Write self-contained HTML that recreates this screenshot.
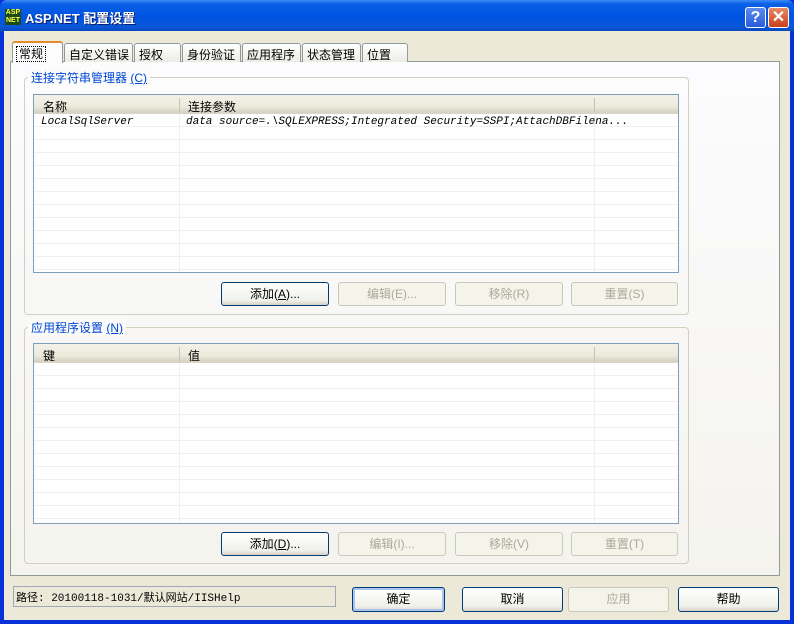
<!DOCTYPE html><html><head><meta charset="utf-8"><style>
*{margin:0;padding:0;box-sizing:border-box}
body{width:794px;height:624px;overflow:hidden;background:#0831d9;font-family:"Liberation Sans","SimSun","Noto Sans CJK SC",sans-serif;font-size:12px;position:relative}
.a{position:absolute}
#title{left:0;top:0;width:794px;height:32px;background:linear-gradient(#3d8cf7 0,#0a5fe6 4px,#0054e3 50%,#0a57d6 85%,#0842b8 100%);border-radius:7px 7px 0 0}
#frame{left:4px;top:31px;width:786px;height:589px;background:#ece9d8}
.tab{top:43px;height:19px;background:linear-gradient(#fff,#ecebe6);border:1px solid #919b9c;border-bottom:none;border-radius:3px 3px 0 0;padding:2px 0 0 4px;font-size:12px}
.page{left:10px;top:61px;width:770px;height:515px;border:1px solid #919b9c;background:linear-gradient(#fcfcfe,#f4f3ee)}
.grp{border:1px solid #d0d0bf;border-radius:4px}
.gl{background:#fbfbfa;color:#0046d5;padding:0 3px;font-size:12px}
.lv{border:1px solid #7f9db9;background:#fff;overflow:hidden}
.hd{left:0;top:0;right:0;height:19px;background:linear-gradient(#f3f2ea,#ebeadb 70%,#d6d3c4);border-bottom:2px solid #d8d5c6;font-size:12px}
.rows{left:0;right:0;top:19px;bottom:0;background:repeating-linear-gradient(to bottom,#fff 0,#fff 12px,#f0f0f0 12px,#f0f0f0 13px)}
.vl{top:0;bottom:0;width:1px;background:#f0f0f0}
.hs{top:3px;width:1px;height:14px;background:#c7c5b2}
.btn{height:24px;border:1px solid #003c74;border-radius:3px;background:linear-gradient(#fff,#f0f0ea 80%,#d6d0c5);text-align:center;line-height:22px;font-size:12px;color:#000}
.dis{border-color:#c9c7ba;color:#aca899;background:#f5f4ea}
.mono{font-family:"Liberation Mono","SimSun",monospace;font-style:italic;font-size:11px}
</style></head><body>
<div class="a" id="title"></div>
<div class="a" style="left:5px;top:9px;width:16px;height:16px;background:#1a4a1a;color:#ff4;font-size:7px;line-height:8px;font-weight:bold;text-align:center">ASP<br>NET</div>
<div class="a" style="left:25px;top:8px;color:#fff;font-size:13px;font-weight:bold;text-shadow:1px 1px #0a1e6e">ASP.NET 配置设置</div>
<div class="a" style="left:745px;top:7px;width:21px;height:21px;border:1px solid #fff;border-radius:3px;background:linear-gradient(#5c8cf0,#2a5bd8);color:#fff;font-weight:bold;font-size:16px;text-align:center;line-height:19px">?</div>
<div class="a" style="left:768px;top:7px;width:21px;height:21px;border:1px solid #fff;border-radius:3px;background:linear-gradient(#e88a64,#c8401c);color:#fff;font-weight:bold;font-size:16px;text-align:center;line-height:19px">✕</div>
<div class="a" id="frame"></div>
<div class="a page"></div>
<div class="a tab" style="left:64px;width:69px">自定义错误</div>
<div class="a tab" style="left:134px;width:47px">授权</div>
<div class="a tab" style="left:182px;width:59px">身份验证</div>
<div class="a tab" style="left:242px;width:59px">应用程序</div>
<div class="a tab" style="left:302px;width:59px">状态管理</div>
<div class="a tab" style="left:362px;width:46px">位置</div>
<div class="a tab" style="left:12px;top:41px;width:51px;height:22px;border-top:2px solid #e68b2c;background:#fcfcfe"><span style="outline:1px dotted #000;padding:0 2px">常规</span></div>

<div class="a grp" style="left:24px;top:77px;width:665px;height:238px"></div>
<div class="a gl" style="left:28px;top:69px">连接字符串管理器 <u>(C)</u></div>
<div class="a lv" style="left:33px;top:94px;width:646px;height:179px">
 <div class="a hd"><span class="a" style="left:9px;top:3px">名称</span><span class="a" style="left:154px;top:3px">连接参数</span><div class="a hs" style="left:145px"></div><div class="a hs" style="left:560px"></div></div>
 <div class="a rows"></div><div class="a vl" style="left:145px;top:19px"></div><div class="a vl" style="left:560px;top:19px"></div>
 <div class="a mono" style="left:7px;top:21px">LocalSqlServer</div>
 <div class="a mono" style="left:152px;top:21px">data source=.\SQLEXPRESS;Integrated Security=SSPI;AttachDBFilena...</div>
</div>
<div class="a btn" style="left:221px;top:282px;width:108px">添加(<u>A</u>)...</div>
<div class="a btn dis" style="left:338px;top:282px;width:108px">编辑(E)...</div>
<div class="a btn dis" style="left:455px;top:282px;width:108px">移除(R)</div>
<div class="a btn dis" style="left:571px;top:282px;width:107px">重置(S)</div>

<div class="a grp" style="left:24px;top:327px;width:665px;height:237px"></div>
<div class="a gl" style="left:28px;top:319px">应用程序设置 <u>(N)</u></div>
<div class="a lv" style="left:33px;top:343px;width:646px;height:181px">
 <div class="a hd"><span class="a" style="left:9px;top:3px">键</span><span class="a" style="left:154px;top:3px">值</span><div class="a hs" style="left:145px"></div><div class="a hs" style="left:560px"></div></div>
 <div class="a rows"></div><div class="a vl" style="left:145px;top:19px"></div><div class="a vl" style="left:560px;top:19px"></div>
</div>
<div class="a btn" style="left:221px;top:532px;width:108px">添加(<u>D</u>)...</div>
<div class="a btn dis" style="left:338px;top:532px;width:108px">编辑(I)...</div>
<div class="a btn dis" style="left:455px;top:532px;width:108px">移除(V)</div>
<div class="a btn dis" style="left:571px;top:532px;width:107px">重置(T)</div>

<div class="a" style="left:13px;top:586px;width:323px;height:21px;border:1px solid #a0a8b8;background:#ece9d8;padding:2px 2px;font-family:'Liberation Mono','SimSun',monospace;font-size:11px">路径: 20100118-1031/默认网站/IISHelp</div>
<div class="a btn" style="left:352px;top:587px;width:93px;height:25px;border-color:#003c74;box-shadow:inset 0 0 0 2px #a9c4f0">确定</div>
<div class="a btn" style="left:462px;top:587px;width:101px;height:25px">取消</div>
<div class="a btn dis" style="left:568px;top:587px;width:101px;height:25px">应用</div>
<div class="a btn" style="left:678px;top:587px;width:101px;height:25px">帮助</div>
</body></html>
